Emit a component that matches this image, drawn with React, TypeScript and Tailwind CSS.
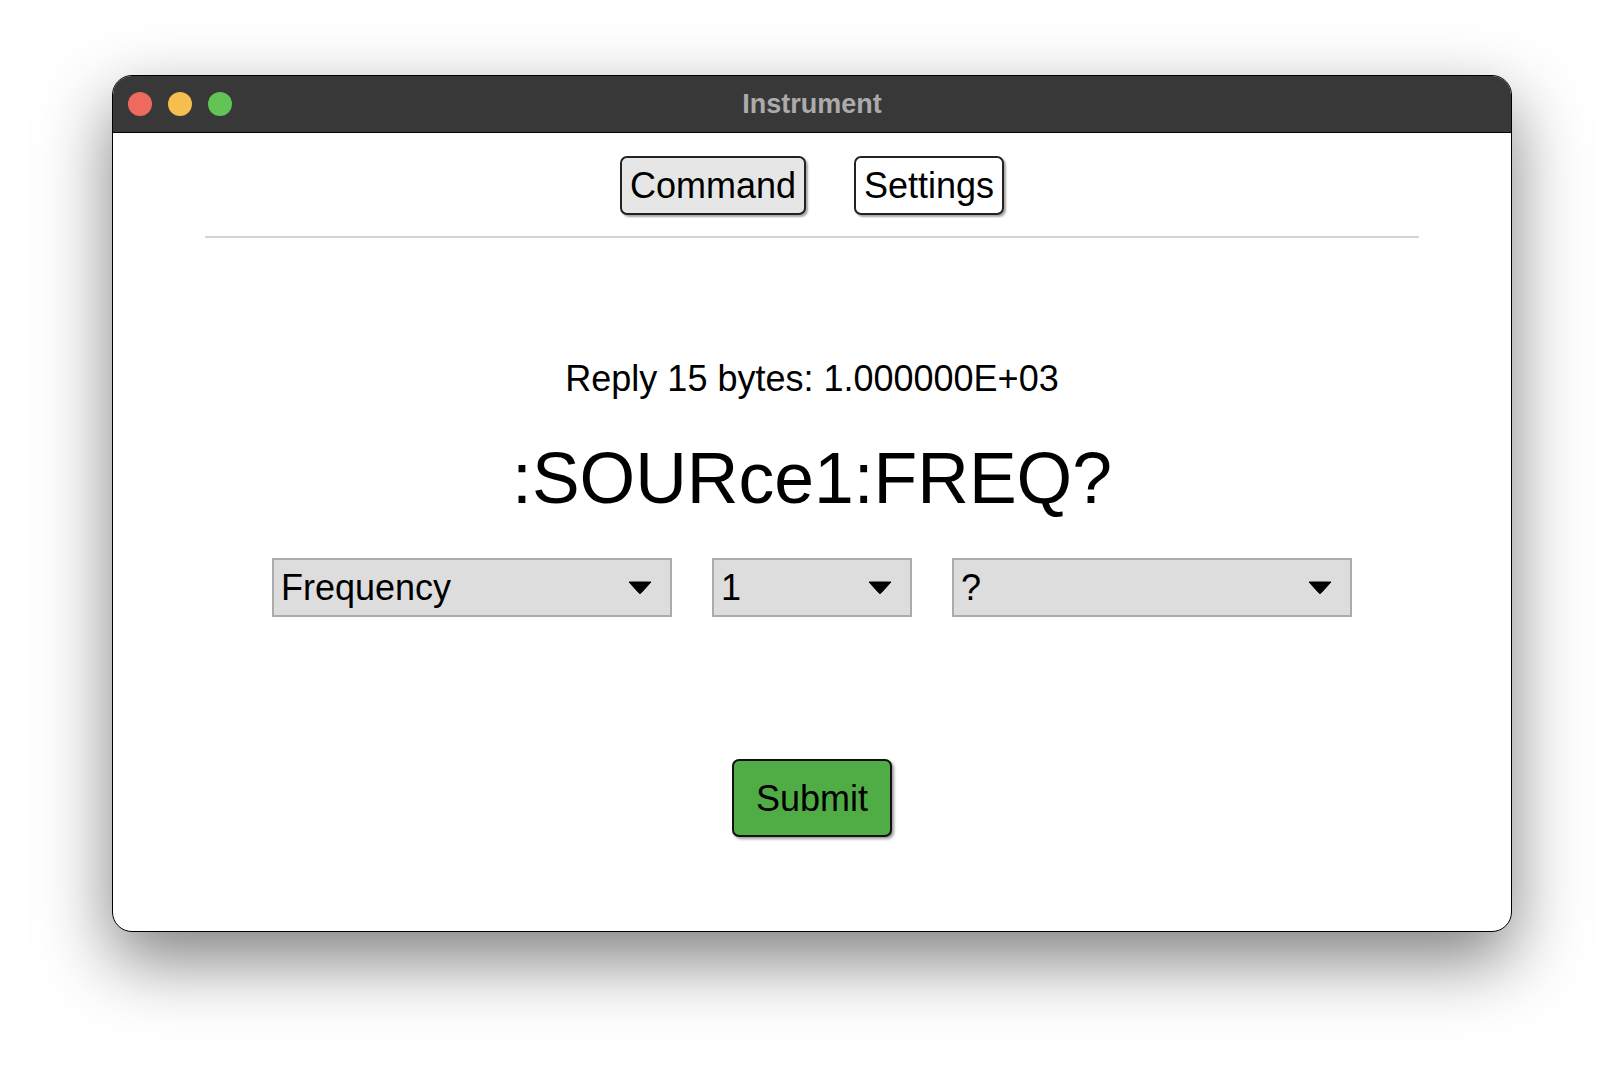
import React from "react";

const SELECTS = [
  { label: "Frequency", width: "w-[400px]" },
  { label: "1", width: "w-[200px]" },
  { label: "?", width: "w-[400px]" },
];

function Caret() {
  return (
    <svg width="24" height="13" viewBox="0 0 24 13" className="shrink-0">
      <path d="M1 1 L23 1 L12.8 12.2 Q12 13 11.2 12.2 Z" fill="#000" stroke="#000" strokeWidth="1" strokeLinejoin="round" />
    </svg>
  );
}

function Select({ label, width }: { label: string; width: string }) {
  return (
    <div className={`${width} h-[59px] flex items-center justify-between pl-[7px] pr-[18px] bg-[#dddddd] border-2 border-[#ababab]`}>
      <span className="text-[36px] leading-[41px] text-black">{label}</span>
      <Caret />
    </div>
  );
}

export default function App() {
  return (
    <div className="w-[1624px] h-[1080px] bg-white pt-[75px] font-['Liberation_Sans',Arial,sans-serif]">
      <div className="mx-auto w-[1400px] h-[857px] rounded-[20px] overflow-hidden bg-white border border-black shadow-[0_28px_70px_rgba(0,0,0,0.5)] flex flex-col">
        {/* title bar */}
        <div className="relative h-[57px] shrink-0 bg-[#383838] border-b border-black flex items-center gap-[16px] pl-[15px]">
          <span className="w-[24px] h-[24px] rounded-full bg-[#ee6a5e]" />
          <span className="w-[24px] h-[24px] rounded-full bg-[#f5be4f]" />
          <span className="w-[24px] h-[24px] rounded-full bg-[#61c454]" />
          <div className="absolute inset-0 flex items-center justify-center">
            <span className="text-[27px] font-bold text-[#ababab]">Instrument</span>
          </div>
        </div>

        {/* content */}
        <div className="flex flex-col items-center">
          <div className="mt-[23px] flex gap-[48px]">
            <button className="px-[8px] py-[7px] text-[36px] leading-[41px] text-black bg-[#e6e6e6] border-2 border-[#222] rounded-[7px] shadow-[2px_2px_2px_rgba(0,0,0,0.35)]">
              Command
            </button>
            <button className="px-[8px] py-[7px] text-[36px] leading-[41px] text-black bg-white border-2 border-[#222] rounded-[7px] shadow-[2px_2px_2px_rgba(0,0,0,0.35)]">
              Settings
            </button>
          </div>

          <div className="mt-[21px] self-stretch mx-[92px] h-[2px] bg-[#d4d4d4]" />

          <div className="mt-[120px] text-[36px] leading-[41px] text-black">Reply 15 bytes: 1.000000E+03</div>

          <div className="mt-[38px] text-[71.5px] leading-[83px] text-black">:SOURce1:FREQ?</div>

          <div className="mt-[38px] flex gap-[40px]">
            {SELECTS.map(s => (
              <Select key={s.label} label={s.label} width={s.width} />
            ))}
          </div>

          <button className="mt-[142px] w-[160px] h-[78px] text-[36px] leading-[41px] text-black bg-[#50ad45] border-2 border-[#111] rounded-[7px] shadow-[2px_2px_3px_rgba(0,0,0,0.4)]">
            Submit
          </button>
        </div>
      </div>
    </div>
  );
}
